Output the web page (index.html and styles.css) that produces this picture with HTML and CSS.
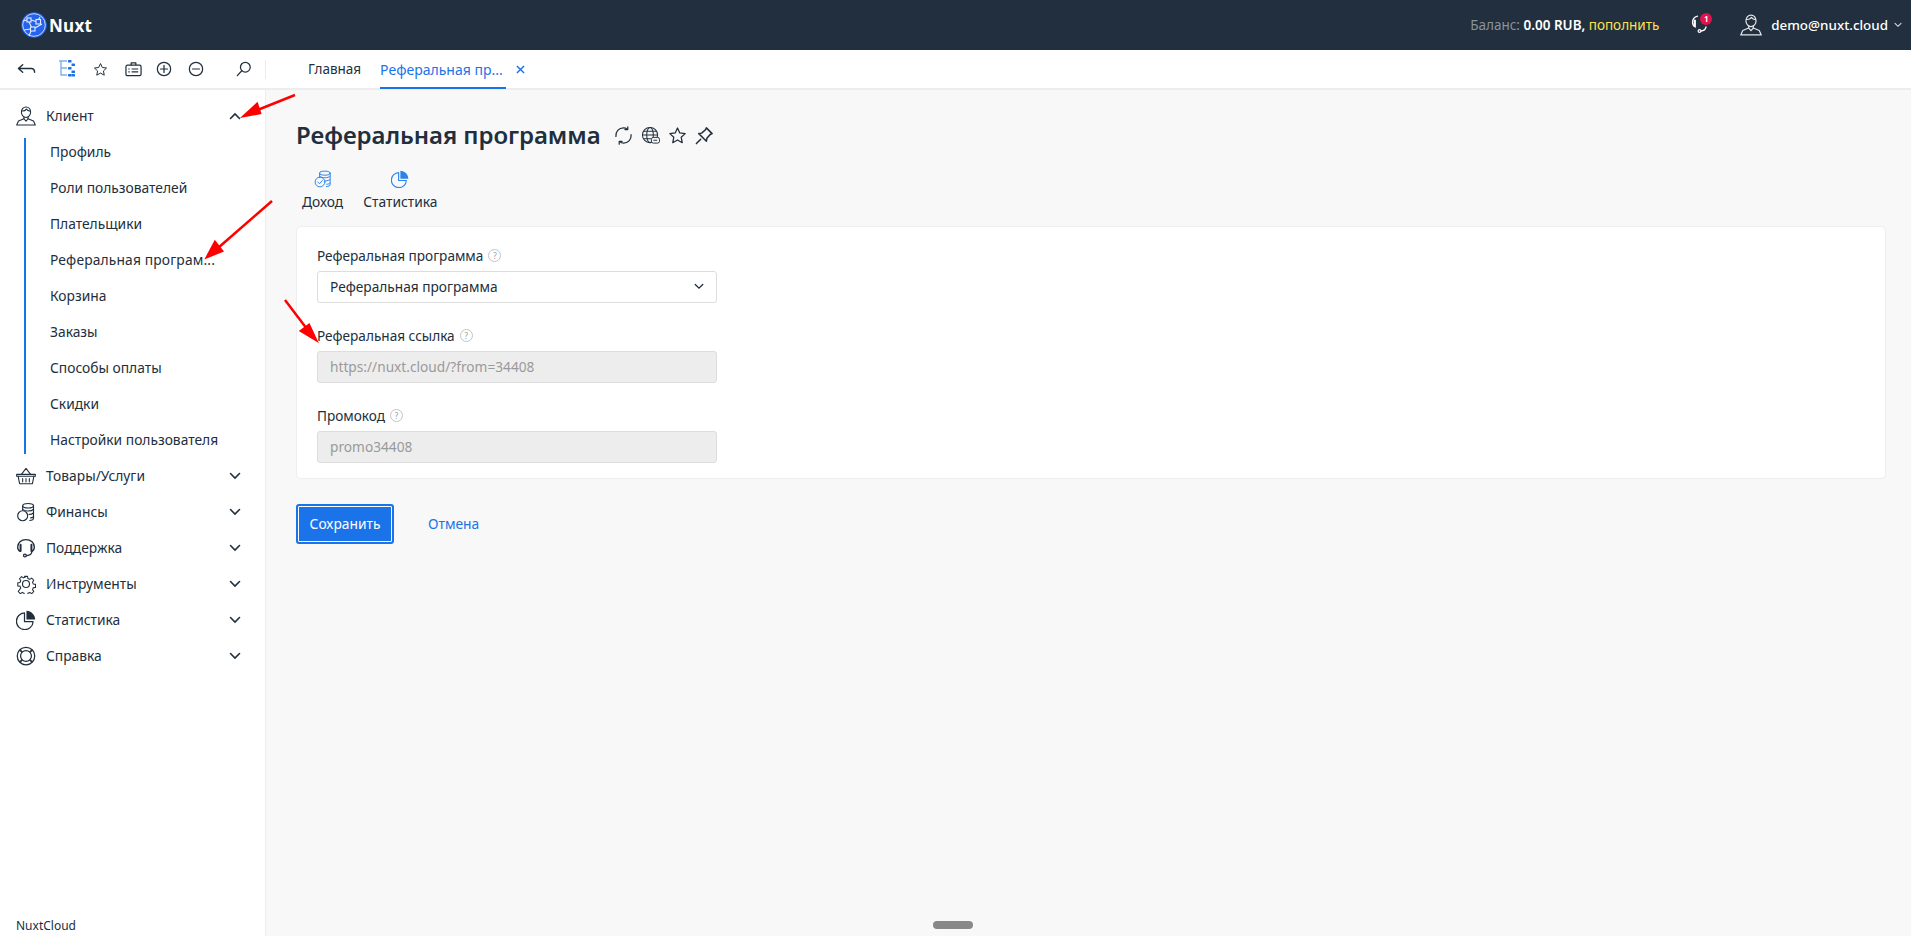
FILE: index.html
```html
<!DOCTYPE html>
<html lang="ru">
<head>
<meta charset="utf-8">
<title>Реферальная программа</title>
<link rel="stylesheet" href="styles.css">
</head>
<body>
<svg class="defs" width="0" height="0" aria-hidden="true">
  <symbol id="i-user" viewBox="0 0 24 24"><g fill="none" stroke="currentColor" stroke-width="1.300" stroke-linejoin="round" stroke-linecap="round"><path d="M6.500 7.500C6.500 3.800 9 1.200 12 1.200s5.500 2.600 5.500 6.300c0 3.500-2.500 6.300-5.500 6.300S6.500 11 6.500 7.500z"/><path d="M7 6c2.500.2 4.300-.5 5.500-2.300 1 1.500 2.500 2.300 4.500 2.500"/><path d="M9.500 13.200V15.300L3 18 .8 22.800h22.400L21 18l-6.500-2.700v-2.100"/><path d="M9.500 15.300L12 18.200l2.500-2.900"/></g></symbol>
  <symbol id="i-basket" viewBox="0 0 24 24"><g fill="none" stroke="currentColor" stroke-width="1.300" stroke-linejoin="round" stroke-linecap="round"><path d="M.8 10h22.400v2.200H.8z"/><path d="M2.500 12.200l1.800 9h15.400l1.800-9"/><path d="M6.500 10L12 2.800 17.500 10"/><path d="M8 15v4M12 15v4M16 15v4"/></g></symbol>
  <symbol id="i-coins" viewBox="0 0 24 24"><g fill="none" stroke="currentColor" stroke-width="1.400" stroke-linejoin="round"><ellipse cx="14.500" cy="4.500" rx="6.500" ry="2.700"/><path d="M8 4.500v6M21 4.500v15c0 1.500-2 2.500-5 2.700"/><path d="M8.500 9c1 1.200 3.500 1.800 6 1.800 3 0 5.500-.8 6.500-2M15 15c3 0 5-.8 6-2M17 19c2 0 3.300-.5 4-1.200"/><circle cx="8" cy="16.500" r="6"/></g></symbol>
  <symbol id="i-coins-ok" viewBox="0 0 24 24"><g fill="none" stroke="currentColor" stroke-width="1.300" stroke-linejoin="round" stroke-linecap="round"><ellipse cx="14.500" cy="4.200" rx="7" ry="2.700"/><path d="M7.500 4.200v6M21.500 4.200v15.500c0 1.300-2 2.300-5 2.500"/><path d="M8 8.500c1 1.200 3.500 1.800 6.500 1.800s6-.8 7-2M15 14.500c3 0 5.500-.8 6.500-2M17 19c2 0 3.700-.5 4.500-1.300"/><circle cx="8" cy="16" r="6.500"/><path d="M5 16l2.300 2.300L11.200 14"/></g></symbol>
  <symbol id="i-headset" viewBox="0 0 24 24"><g fill="none" stroke="currentColor" stroke-width="1.600" stroke-linecap="round"><path d="M5 16C3 15 2 13 2 11 2 6 6 2 12 2s10 4 10 9c0 2-1 4-3 5"/><path d="M5.500 8v7.500" stroke-width="2.400"/><path d="M18.500 8v7.500" stroke-width="2.400"/><path d="M19 16c0 3-2.500 5-6 5.200"/><circle cx="10.700" cy="21" r="1.700"/></g></symbol>
  <symbol id="i-gear" viewBox="0 0 24 24"><g fill="none" stroke="currentColor" stroke-width="1.400" stroke-linejoin="round"><path d="M10 1.800h4l.6 3 2.400 1 2.600-1.700 2.800 2.900-1.700 2.500 1 2.400 3 .6v4l-3 .6-1 2.400 1.700 2.500-2.800 2.900-2.600-1.700-2.400 1-.6 3h-4l-.6-3-2.400-1-2.600 1.700-2.800-2.900L5 17.500l-1-2.400-3-.6v-4l3-.6 1-2.400L3.300 5l2.800-2.900L8.700 3.800l2.400-1z" transform="translate(1.200 1.200) scale(.9)"/><circle cx="12" cy="12" r="4.200"/></g></symbol>
  <symbol id="i-pie" viewBox="0 0 24 24"><path d="M10.200 3.500A10 10 0 1 0 20.500 14h-10.300z" fill="none" stroke="currentColor" stroke-width="1.500" stroke-linejoin="round"/><path d="M12.500 1c5.800.2 10.300 4.700 10.500 10.500H12.500z" fill="currentColor"/></symbol>
  <symbol id="i-ring" viewBox="0 0 24 24"><g fill="none" stroke="currentColor" stroke-width="1.500"><circle cx="12" cy="12" r="10.500"/><circle cx="12" cy="12" r="6.500"/><path d="M4.600 4.600l3 3M19.400 4.600l-3 3M4.600 19.400l3-3M19.400 19.400l-3-3" stroke-width="2"/></g></symbol>
  <symbol id="i-down" viewBox="0 0 12 8"><path d="M1.500 1.500L6 6l4.500-4.500" fill="none" stroke="currentColor" stroke-width="1.600" stroke-linecap="round"/></symbol>
  <symbol id="i-up" viewBox="0 0 12 8"><path d="M1.500 6.500L6 2l4.500 4.500" fill="none" stroke="currentColor" stroke-width="1.600" stroke-linecap="round"/></symbol>
  <symbol id="i-star" viewBox="0 0 24 24"><path d="M12 2.500l2.900 6.300 6.800.8-5 4.700 1.300 6.800L12 17.700l-6 3.400 1.300-6.800-5-4.700 6.800-.8z" fill="none" stroke="currentColor" stroke-width="1.600" stroke-linejoin="round"/></symbol>
</svg>

<div class="app">
  <header class="topbar">
    <div class="brand">
      <svg class="logo" viewBox="0 0 26 26" aria-hidden="true"><circle cx="13" cy="13" r="12.800" fill="#2563eb"/><circle cx="13" cy="13" r="11.300" fill="none" stroke="#c5d6fb" stroke-width="1"/><g fill="none" stroke="#e4ecfe" stroke-width="1.100"><rect x="6" y="6" width="4" height="4"/><rect x="15" y="7.500" width="4.500" height="4.500"/><rect x="9.500" y="15" width="4.500" height="4"/><path d="M2 9l4-1M10 8l5 1.500M8 10l2.500 5M14 16l7-4M10 19l-2 5M19 5l-1.500 2.500M3 18l6.500-1"/></g></svg>
      <span class="brand-name">Nuxt</span>
    </div>
    <div class="topbar-right">
      <div class="balance"><span class="balance-label">Баланс:</span> <b>0.00 RUB,</b> <span class="balance-link">пополнить</span></div>
      <div class="support">
        <svg class="support-icon" viewBox="0 0 18 18"><g fill="none" stroke="currentColor" stroke-linecap="round"><path d="M4.500 12C2.500 11 1.500 9.500 1.500 7.500 1.500 4.500 3.500 2 6.500 1.200" stroke-width="1.300"/><path d="M3.800 5.500v5.500" stroke-width="2.200"/><path d="M15 12c-.5 2.500-2.500 3.800-5 4" stroke-width="1.300"/><circle cx="8.500" cy="16" r="1.400" stroke-width="1.200"/></g></svg>
        <span class="badge">1</span>
      </div>
      <div class="account">
        <svg class="account-icon"><use href="#i-user"/></svg>
        <span class="account-name">demo@nuxt.cloud</span>
        <svg class="account-caret"><use href="#i-down"/></svg>
      </div>
    </div>
  </header>

  <div class="toolbar">
    <div class="tools">
      <svg class="tool tool-back" viewBox="0 0 20 12"><path d="M6 1.500L1.500 5.500 6 9.500M1.500 5.500H15c2 0 3.500 1.500 3.500 4" fill="none" stroke="currentColor" stroke-width="1.500" stroke-linecap="round" stroke-linejoin="round"/></svg>
      <svg class="tool tool-tree" viewBox="0 0 18 18"><g fill="none" stroke="#7fb0ee" stroke-width="1.400"><path d="M1 1h8M3 1v14h6M3 8h6"/></g><g fill="#1a73e8"><rect x="10" y="0" width="3.500" height="2.500" rx=".6"/><rect x="13.500" y="3.500" width="3.500" height="2.500" rx=".6"/><rect x="10" y="7" width="3.500" height="2.500" rx=".6"/><rect x="13.500" y="10.500" width="3.500" height="2.500" rx=".6"/><rect x="10" y="14" width="3.500" height="2.500" rx=".6"/><rect x="13.500" y="14" width="3.500" height="2.500" rx=".6"/></g></svg>
      <svg class="tool tool-star"><use href="#i-star"/></svg>
      <svg class="tool tool-case" viewBox="0 0 18 16"><g fill="none" stroke="currentColor" stroke-width="1.300" stroke-linejoin="round"><rect x="1" y="4" width="16" height="11" rx="1.500"/><path d="M6.500 4V1.500h5V4"/><path d="M7 8h7M7 11h7M3.500 8h1.500M3.500 11h1.500"/></g></svg>
      <svg class="tool tool-plus" viewBox="0 0 18 18"><g fill="none" stroke="currentColor" stroke-width="1.400" stroke-linecap="round"><circle cx="9" cy="9" r="7.500"/><path d="M5 9h8M9 5v8"/></g></svg>
      <svg class="tool tool-minus" viewBox="0 0 18 18"><g fill="none" stroke="currentColor" stroke-width="1.400" stroke-linecap="round"><circle cx="9" cy="9" r="7.500"/><path d="M5 9h8"/></g></svg>
      <svg class="tool tool-search" viewBox="0 0 18 18"><g fill="none" stroke="currentColor" stroke-width="1.400" stroke-linecap="round"><circle cx="10.500" cy="7" r="5.500"/><path d="M6.500 11L1.500 16.500"/></g></svg>
    </div>
    <nav class="tabs">
      <a class="tab">Главная</a>
      <a class="tab tab-active"><span class="tab-text">Реферальная пр...</span></a>
      <svg class="tab-close" viewBox="0 0 10 10"><path d="M1 1l8 8M9 1L1 9" fill="none" stroke="#1a73e8" stroke-width="1.600"/></svg>
    </nav>
  </div>

  <div class="workspace">
    <aside class="sidebar">
      <div class="menu-row menu-row-open">
        <svg class="menu-icon"><use href="#i-user"/></svg><span class="menu-label">Клиент</span>
        <svg class="menu-caret"><use href="#i-up"/></svg>
      </div>
      <ul class="submenu">
        <li>Профиль</li>
        <li>Роли пользователей</li>
        <li>Плательщики</li>
        <li class="sub-current">Реферальная програм...</li>
        <li>Корзина</li>
        <li>Заказы</li>
        <li>Способы оплаты</li>
        <li>Скидки</li>
        <li>Настройки пользователя</li>
      </ul>
      <div class="menu-row"><svg class="menu-icon"><use href="#i-basket"/></svg><span class="menu-label">Товары/Услуги</span><svg class="menu-caret"><use href="#i-down"/></svg></div>
      <div class="menu-row"><svg class="menu-icon"><use href="#i-coins"/></svg><span class="menu-label">Финансы</span><svg class="menu-caret"><use href="#i-down"/></svg></div>
      <div class="menu-row"><svg class="menu-icon"><use href="#i-headset"/></svg><span class="menu-label">Поддержка</span><svg class="menu-caret"><use href="#i-down"/></svg></div>
      <div class="menu-row"><svg class="menu-icon"><use href="#i-gear"/></svg><span class="menu-label">Инструменты</span><svg class="menu-caret"><use href="#i-down"/></svg></div>
      <div class="menu-row"><svg class="menu-icon"><use href="#i-pie"/></svg><span class="menu-label">Статистика</span><svg class="menu-caret"><use href="#i-down"/></svg></div>
      <div class="menu-row"><svg class="menu-icon"><use href="#i-ring"/></svg><span class="menu-label">Справка</span><svg class="menu-caret"><use href="#i-down"/></svg></div>
      <div class="sidebar-foot">NuxtCloud</div>
    </aside>

    <main class="main">
      <div class="title-row">
        <h1 class="title">Реферальная программа</h1>
        <div class="title-icons">
          <svg class="title-icon" viewBox="0 0 20 20"><g fill="none" stroke="currentColor" stroke-width="1.300" stroke-linecap="round" stroke-linejoin="round"><path d="M2 11C1.500 6 5 2 10 2c1.500 0 3 .5 4 1.300"/><path d="M18 9c.5 5-3 9-8 9-1.500 0-3-.5-4-1.300"/><path d="M14.500 .8v3h-3M5.500 19.200v-3h3"/></g></svg>
          <svg class="title-icon" viewBox="0 0 20 20"><g fill="none" stroke="currentColor" stroke-width="1.100"><circle cx="9.500" cy="9.500" r="8"/><ellipse cx="9.500" cy="9.500" rx="3.500" ry="8"/><path d="M1.500 9.500h16M2.500 5.500h14M2.500 13.500h8"/></g><rect x="11" y="12" width="8.500" height="6" rx="2" fill="#f8f8f8" stroke="currentColor"/><path d="M13 15h4" stroke="currentColor"/></svg>
          <svg class="title-icon"><use href="#i-star"/></svg>
          <svg class="title-icon" viewBox="0 0 20 20"><g fill="none" stroke="currentColor" stroke-width="1.600" stroke-linejoin="round" stroke-linecap="round"><path d="M12 2l6 6-2 1-3.500 4-.5 3-8-8 3-.5 4-3.500z"/><path d="M6 14l-4.500 4.500"/></g></svg>
        </div>
      </div>

      <div class="actions">
        <div class="action">
          <svg class="action-icon"><use href="#i-coins-ok"/></svg>
          <span>Доход</span>
        </div>
        <div class="action">
          <svg class="action-icon"><use href="#i-pie"/></svg>
          <span>Статистика</span>
        </div>
      </div>

      <section class="card">
        <div class="field">
          <div class="field-label">Реферальная программа <span class="help">?</span></div>
          <div class="control control-select">Реферальная программа <svg class="select-caret"><use href="#i-down"/></svg></div>
        </div>
        <div class="field">
          <div class="field-label">Реферальная ссылка <span class="help">?</span></div>
          <div class="control control-disabled">https://nuxt.cloud/?from=34408</div>
        </div>
        <div class="field">
          <div class="field-label">Промокод <span class="help">?</span></div>
          <div class="control control-disabled">promo34408</div>
        </div>
      </section>

      <div class="form-actions">
        <button class="btn-save" type="button">Сохранить</button>
        <a class="btn-cancel">Отмена</a>
      </div>

      <div class="drag-handle"></div>
    </main>
  </div>

  <svg class="arrows" viewBox="0 0 1911 936" aria-hidden="true">
    <g stroke="#f00" stroke-width="2.500" fill="#f00">
      <path d="M295 95L255 111"/><path d="M244 116l13-12 3 9z"/>
      <path d="M272 201L218 248"/><path d="M207 257l8-15 7 9z"/>
      <path d="M285 300L307 329"/><path d="M316 340l-15-9 8-6z"/>
    </g>
  </svg>
</div>
</body>
</html>
```

FILE: styles.css
```css
* { box-sizing: border-box; }
html, body { margin: 0; height: 100%; }
body {
  font-family: "Noto Sans", "Open Sans", sans-serif;
  font-size: 13.800px;
  color: #212f3d;
  background: #f8f8f8;
  overflow: hidden;
}
.defs { position: absolute; }
.app { position: relative; display: flex; flex-direction: column; height: 936px; }

.topbar {
  height: 50px;
  flex: none;
  background: #212f3e;
  display: flex;
  align-items: center;
  justify-content: space-between;
  padding: 0 9px 0 21px;
  color: #fff;
}
.brand { display: flex; align-items: center; gap: 2px; }
.logo { width: 26px; height: 26px; }
.brand-name { font-size: 17px; font-weight: 700; letter-spacing: .3px; }
.topbar-right { display: flex; align-items: center; }
.balance { font-size: 13.500px; width: 197px; white-space: nowrap; }
.balance-label { color: #8a929b; }
.balance b { font-weight: 600; }
.balance-link { color: #ffe14d; }
.support { position: relative; width: 24px; height: 24px; margin-left: 24px; }
.support-icon { width: 18px; height: 18px; margin-top: 2px; display: block; color: #fff; }
.badge {
  position: absolute;
  left: 9px;
  top: 0;
  width: 12px;
  height: 12px;
  border-radius: 50%;
  background: #e0134f;
  color: #fff;
  font-size: 8px;
  font-weight: 700;
  line-height: 12px;
  text-align: center;
}
.account { display: flex; align-items: center; margin-left: 25px; }
.account-icon { width: 22px; height: 22px; color: #e6e8ea; }
.account-name { margin-left: 9px; font-size: 13.400px; font-weight: 500; }
.account-caret { width: 8px; height: 6px; margin-left: 6px; color: #d8dadd; }

.toolbar {
  height: 40px;
  flex: none;
  background: #fff;
  border-bottom: 2px solid #ededed;
  display: flex;
}
.tools {
  width: 265px;
  flex: none;
  display: flex;
  align-items: center;
  padding-left: 17px;
  color: #212f3d;
}
.tools::after {
  content: "";
  position: absolute;
  left: 265px;
  top: 60px;
  width: 1px;
  height: 19px;
  background: #ececec;
}
.tool { flex: none; }
.tool-back { width: 19px; height: 12px; }
.tool-tree { width: 18px; height: 18px; margin-left: 22px; }
.tool-star { width: 15px; height: 15px; margin-left: 17px; }
.tool-case { width: 17px; height: 16px; margin-left: 17px; }
.tool-plus { width: 16px; height: 16px; margin-left: 14px; }
.tool-minus { width: 16px; height: 16px; margin-left: 16px; }
.tool-search { width: 16px; height: 16px; margin-left: 32px; }
.tabs { display: flex; align-items: stretch; padding-left: 43px; }
.tab {
  display: flex;
  align-items: center;
  font-size: 13.500px;
  color: #212f3d;
  margin-right: 19px;
}
.tab-active {
  width: 126px;
  margin-right: 10px;
  font-size: 14px;
  color: #1a73e8;
  border-bottom: 2px solid #1a73e8;
  margin-bottom: -1px;
  padding-top: 1px;
}
.tab-text { white-space: nowrap; }
.tab-close { width: 9px; height: 9px; align-self: center; }

.workspace { flex: 1; min-height: 0; display: flex; }
.sidebar {
  width: 266px;
  flex: none;
  background: #fff;
  border-right: 1px solid #ededed;
  display: flex;
  flex-direction: column;
  padding-top: 8px;
}
.menu-row {
  height: 36px;
  flex: none;
  display: flex;
  align-items: center;
  padding-left: 16px;
}
.menu-icon { width: 20px; height: 20px; flex: none; color: #212f3d; }
.menu-label { margin-left: 10px; flex: 1; padding-bottom: 2px; }
.menu-caret { width: 12px; height: 8px; flex: none; margin-right: 24px; color: #212f3d; }
.submenu {
  position: relative;
  list-style: none;
  margin: 0;
  padding: 0;
}
.submenu::before {
  content: "";
  position: absolute;
  left: 24px;
  top: 4px;
  bottom: 4px;
  width: 2px;
  background: #1a73e8;
}
.submenu li {
  height: 36px;
  display: flex;
  align-items: center;
  padding: 0 0 2px 50px;
  white-space: nowrap;
}
.sub-current { letter-spacing: .15px; }
.sidebar-foot { margin-top: auto; padding: 0 0 2px 16px; font-size: 12px; }

.main { position: relative; flex: 1; min-width: 0; padding: 0 25px 0 30px; }
.title-row { display: flex; align-items: center; height: 44px; margin-top: 23px; }
.title { margin: 0 0 2px; font-size: 24px; font-weight: 600; letter-spacing: -.05px; }
.title-icons { display: flex; align-items: center; gap: 8px; margin-left: 13px; }
.title-icon { width: 19px; height: 19px; color: #212f3d; }
.actions { display: flex; height: 45px; margin-top: 13px; gap: 20px; padding-left: 6px; }
.action { display: flex; flex-direction: column; align-items: center; }
.action-icon { width: 18px; height: 18px; color: #2b83ea; margin-bottom: 4px; flex: none; }
.card {
  margin-top: 11px;
  height: 253px;
  background: #fff;
  border: 1px solid #eeeeee;
  border-radius: 5px;
  padding: 18px 20px 0;
}
.field { margin-bottom: 22px; width: 400px; }
.field-label { display: flex; align-items: center; gap: 5px; height: 21px; font-size: 13.600px; margin-bottom: 5px; }
.help {
  display: inline-flex;
  align-items: center;
  justify-content: center;
  width: 13px;
  height: 13px;
  border: 1px solid #c4c4c4;
  border-radius: 50%;
  font-size: 8px;
  line-height: 1;
  color: #999;
}
.control {
  display: flex;
  align-items: center;
  height: 32px;
  border: 1px solid #dddddd;
  border-radius: 3px;
  padding: 0 12px 1px;
  font-size: 13.700px;
}
.control-select { justify-content: space-between; background: #fff; }
.select-caret { width: 10px; height: 7px; color: #212f3d; }
.control-disabled { background: #ededed; color: #9a9a9a; }
.form-actions { display: flex; align-items: center; margin-top: 25px; }
.btn-save {
  width: 98px;
  height: 40px;
  font: inherit;
  color: #fff;
  background: #1a73e8;
  border: 2px solid #1a73e8;
  box-shadow: inset 0 0 0 1px #fff;
  border-radius: 3px;
  padding: 0 0 2px;
}
.btn-cancel { margin-left: 34px; color: #1a73e8; padding-bottom: 2px; }
.drag-handle {
  position: absolute;
  left: 667px;
  bottom: 7px;
  width: 40px;
  height: 8px;
  border-radius: 4px;
  background: #888;
}
.arrows { position: absolute; left: 0; top: 0; width: 1911px; height: 936px; pointer-events: none; }
```
